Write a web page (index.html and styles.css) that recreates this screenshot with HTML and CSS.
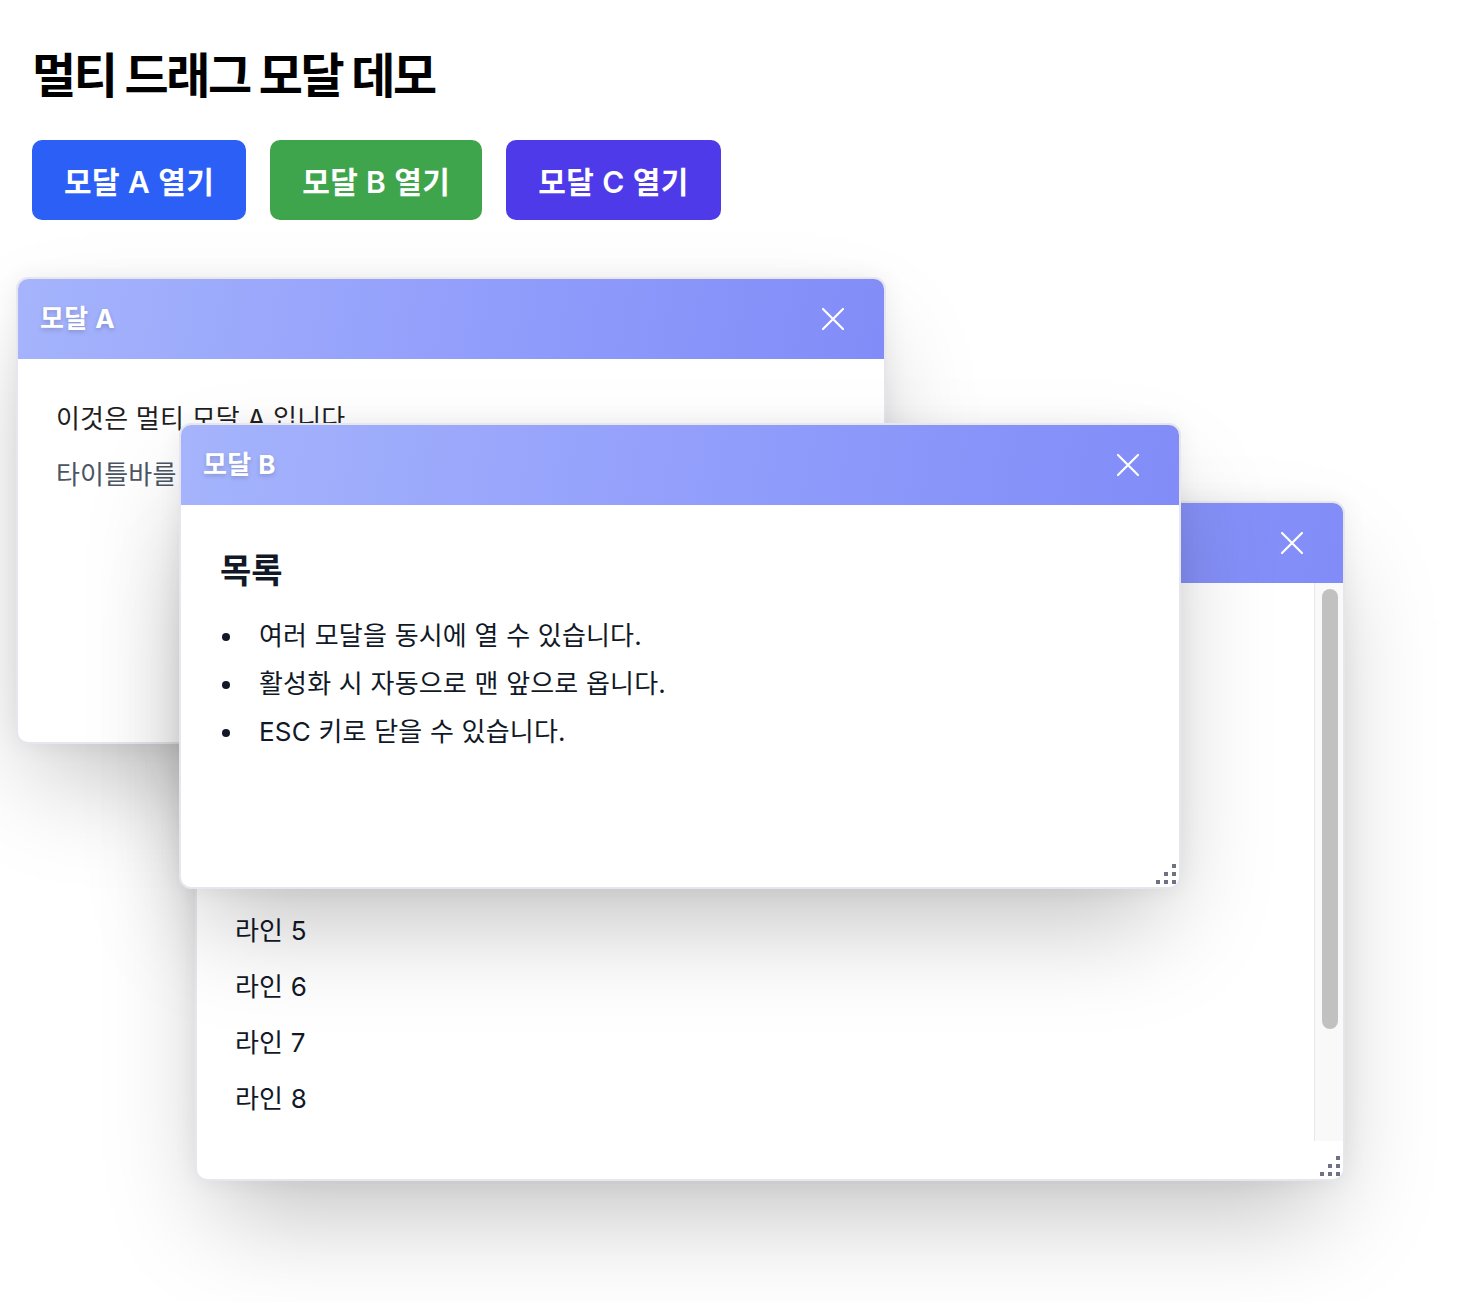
FILE: index.html
```html
<!DOCTYPE html>
<html lang="ko">
<head>
<meta charset="utf-8">
<title>멀티 드래그 모달 데모</title>
<link rel="stylesheet" href="styles.css">
</head>
<body>
<h1 class="title">멀티 드래그 모달 데모</h1>
<div class="toolbar">
  <button class="btn btn-a">모달 A 열기</button>
  <button class="btn btn-b">모달 B 열기</button>
  <button class="btn btn-c">모달 C 열기</button>
</div>

<div class="modal modal-a">
  <div class="modal-header">
    <span class="modal-title">모달 A</span>
    <button class="close" aria-label="닫기"><svg viewBox="0 0 24 24" width="24" height="24"><path d="M2 2 L22 22 M22 2 L2 22" stroke="#fff" stroke-width="2.2" fill="none" stroke-linecap="round"/></svg></button>
  </div>
  <div class="modal-body">
    <p>이것은 멀티 모달 A 입니다.</p>
    <p class="muted">타이틀바를 드래그하여 이동할 수 있습니다.</p>
  </div>
  <div class="modal-footer"><svg class="grip" viewBox="0 0 20 20" width="20" height="20"><rect x="16" y="0" width="4" height="4"/><rect x="8" y="8" width="4" height="4"/><rect x="16" y="8" width="4" height="4"/><rect x="0" y="16" width="4" height="4"/><rect x="8" y="16" width="4" height="4"/><rect x="16" y="16" width="4" height="4"/></svg></div>
</div>

<div class="modal modal-c">
  <div class="modal-header">
    <span class="modal-title">모달 C</span>
    <button class="close" aria-label="닫기"><svg viewBox="0 0 24 24" width="24" height="24"><path d="M2 2 L22 22 M22 2 L2 22" stroke="#fff" stroke-width="2.2" fill="none" stroke-linecap="round"/></svg></button>
  </div>
  <div class="modal-body scroll">
    <div class="scroll-content">
      <p class="intro">스크롤 가능한 긴 콘텐츠입니다.</p>
      <p>라인 1</p>
      <p>라인 2</p>
      <p>라인 3</p>
      <p>라인 4</p>
      <p>라인 5</p>
      <p>라인 6</p>
      <p>라인 7</p>
      <p>라인 8</p>
    </div>
    <div class="scrollbar"><div class="thumb"></div></div>
  </div>
  <div class="modal-footer"><svg class="grip" viewBox="0 0 20 20" width="20" height="20"><rect x="16" y="0" width="4" height="4"/><rect x="8" y="8" width="4" height="4"/><rect x="16" y="8" width="4" height="4"/><rect x="0" y="16" width="4" height="4"/><rect x="8" y="16" width="4" height="4"/><rect x="16" y="16" width="4" height="4"/></svg></div>
</div>

<div class="modal modal-b">
  <div class="modal-header">
    <span class="modal-title">모달 B</span>
    <button class="close" aria-label="닫기"><svg viewBox="0 0 24 24" width="24" height="24"><path d="M2 2 L22 22 M22 2 L2 22" stroke="#fff" stroke-width="2.2" fill="none" stroke-linecap="round"/></svg></button>
  </div>
  <div class="modal-body">
    <h3 class="list-title">목록</h3>
    <ul class="list">
      <li>여러 모달을 동시에 열 수 있습니다.</li>
      <li>활성화 시 자동으로 맨 앞으로 옵니다.</li>
      <li>ESC 키로 닫을 수 있습니다.</li>
    </ul>
  </div>
  <div class="modal-footer"><svg class="grip" viewBox="0 0 20 20" width="20" height="20"><rect x="16" y="0" width="4" height="4"/><rect x="8" y="8" width="4" height="4"/><rect x="16" y="8" width="4" height="4"/><rect x="0" y="16" width="4" height="4"/><rect x="8" y="16" width="4" height="4"/><rect x="16" y="16" width="4" height="4"/></svg></div>
</div>
</body>
</html>
```

FILE: styles.css
```css
* { box-sizing: border-box; }

html, body {
  margin: 0;
  background: #ffffff;
}

body {
  padding: 32px;
  font-family: Inter, "Noto Sans CJK KR", sans-serif;
  color: #111827;
  min-height: 1302px;
  position: relative;
}

.title {
  margin: 16px 0 36px;
  font-size: 48px;
  line-height: 56px;
  font-weight: 700;
  letter-spacing: -2.4px;
  color: #000;
}

.toolbar {
  display: flex;
  gap: 24px;
}

.btn {
  height: 80px;
  padding: 0 32px;
  border: none;
  border-radius: 10px;
  color: #fff;
  font-family: Inter, "Noto Sans CJK KR", sans-serif;
  font-size: 30px;
  font-weight: 600;
  letter-spacing: 0.4px;
  cursor: pointer;
}
.btn-a { background: #2c5ff6; }
.btn-b { background: #3fa54d; }
.btn-c { background: #4e3ae9; }

.modal {
  position: absolute;
  display: flex;
  flex-direction: column;
  background: #fff;
  border: 2px solid #e6e6ec;
  border-radius: 12px;
  overflow: hidden;
  box-shadow: 0 50px 100px -20px rgba(0, 0, 0, 0.25), 0 0 24px rgba(0, 0, 0, 0.06);
}

.modal-a { left: 16px; top: 277px; width: 870px; height: 467px; z-index: 1; }
.modal-c { left: 195px; top: 501px; width: 1150px; height: 680px; z-index: 2; }
.modal-b { left: 179px; top: 423px; width: 1002px; height: 466px; z-index: 3; }

.modal-header {
  flex: none;
  height: 80px;
  display: flex;
  align-items: center;
  justify-content: space-between;
  padding: 0 39px 0 22px;
  background: linear-gradient(100deg, #a5b4fc 0%, #939ffb 50%, #818cf8 100%);
}

.modal-title {
  color: #fff;
  font-size: 26px;
  font-weight: 700;
  letter-spacing: 0.4px;
  padding-bottom: 5px;
  text-shadow: 0 2px 4px rgba(0, 0, 0, 0.18);
}

.close {
  width: 24px;
  height: 24px;
  padding: 0;
  border: none;
  background: transparent;
  display: flex;
  align-items: center;
  justify-content: center;
  cursor: pointer;
}

.modal-body {
  flex: 1;
  min-height: 0;
  padding: 40px 38px;
  font-size: 26px;
  letter-spacing: 0.2px;
  color: #1f2937;
}

.modal-body p {
  margin: 0 0 16px;
  line-height: 40px;
}

.modal-a .modal-body p { color: #1f1f1f; }
.modal-a .modal-body p.muted { color: #4b5563; }

.modal-b .modal-body { padding: 32px 39px; }

.list-title {
  margin: 12px 0 19px;
  font-size: 34px;
  line-height: 44px;
  font-weight: 700;
  letter-spacing: 0;
  color: #111827;
}

.list {
  margin: 0;
  padding: 0;
  list-style: none;
}

.list li {
  display: flex;
  align-items: center;
  line-height: 48px;
  color: #111827;
}

.list li::before {
  content: "";
  flex: none;
  width: 8px;
  height: 8px;
  border-radius: 50%;
  background: #111827;
  margin: 2px 29px 0 2px;
}

.scroll {
  display: flex;
  padding: 0;
}

.scroll-content {
  flex: 1;
  min-width: 0;
  overflow: hidden;
  padding: 38px 38px;
}
.scroll .intro { margin-bottom: 26px; }
.scroll p { color: #111827; }

.scrollbar {
  flex: none;
  width: 29px;
  background: #f9f9f9;
  border-left: 1px solid #e8e8e8;
  padding: 6px 5px 0 7px;
}

.thumb {
  height: 440px;
  border-radius: 8px;
  background: #c1c1c1;
}

.modal-footer {
  flex: none;
  height: 38px;
  position: relative;
}

.grip {
  position: absolute;
  right: 3px;
  bottom: 3px;
  fill: #6f7282;
}
```
